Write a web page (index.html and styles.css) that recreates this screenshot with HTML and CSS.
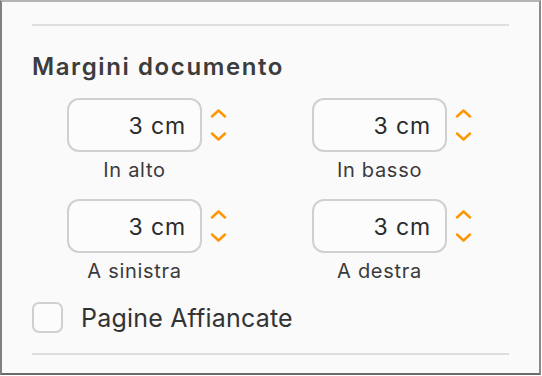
FILE: index.html
```html
<!DOCTYPE html>
<html lang="it">
<head>
  <meta charset="UTF-8">
  <meta name="viewport" content="width=device-width, initial-scale=1.0">
  <title>Margini documento</title>

  <link rel="stylesheet" href="styles.css">
</head>
<body>
<div class="panel">
  <hr class="divider">

  <h2 class="title">Margini documento</h2>

  <div class="margins">
    <div class="field">
      <div class="field-row">
        <div class="value">3 cm</div>
        <div class="stepper">
          <svg viewBox="0 0 17 9" width="17" height="9"><path d="M2 7.5 L8.5 1.5 L15 7.5"/></svg>
          <svg viewBox="0 0 17 9" width="17" height="9"><path d="M2 1.5 L8.5 7.5 L15 1.5"/></svg>
        </div>
      </div>
      <div class="label">In alto</div>
    </div>

    <div class="field">
      <div class="field-row">
        <div class="value">3 cm</div>
        <div class="stepper">
          <svg viewBox="0 0 17 9" width="17" height="9"><path d="M2 7.5 L8.5 1.5 L15 7.5"/></svg>
          <svg viewBox="0 0 17 9" width="17" height="9"><path d="M2 1.5 L8.5 7.5 L15 1.5"/></svg>
        </div>
      </div>
      <div class="label">In basso</div>
    </div>

    <div class="field">
      <div class="field-row">
        <div class="value">3 cm</div>
        <div class="stepper">
          <svg viewBox="0 0 17 9" width="17" height="9"><path d="M2 7.5 L8.5 1.5 L15 7.5"/></svg>
          <svg viewBox="0 0 17 9" width="17" height="9"><path d="M2 1.5 L8.5 7.5 L15 1.5"/></svg>
        </div>
      </div>
      <div class="label">A sinistra</div>
    </div>

    <div class="field">
      <div class="field-row">
        <div class="value">3 cm</div>
        <div class="stepper">
          <svg viewBox="0 0 17 9" width="17" height="9"><path d="M2 7.5 L8.5 1.5 L15 7.5"/></svg>
          <svg viewBox="0 0 17 9" width="17" height="9"><path d="M2 1.5 L8.5 7.5 L15 1.5"/></svg>
        </div>
      </div>
      <div class="label">A destra</div>
    </div>
  </div>

  <label class="check">
    <span class="check-box"></span>
    <span class="check-text">Pagine Affiancate</span>
  </label>

  <hr class="divider bottom">
</div>
</body>
</html>
```

FILE: styles.css
```css
body {
  margin: 0;
  font-family: Inter, "Noto Sans", sans-serif;
  color: #333;
}
.panel {
  box-sizing: border-box;
  width: 541px;
  height: 375px;
  padding: 22px 30px 0 30px;
  background: #fafafa;
  border-top: 2px solid #b4b4b4;
  border-left: 2px solid #808080;
  border-right: 2px solid #8a8a8a;
  border-bottom: 2px solid #6a6a6a;
}
.divider {
  margin: 0;
  border: none;
  height: 2px;
  background: #dedede;
}
.divider.bottom {
  margin-top: 20px;
}
.title {
  margin: 26px 0 0 0;
  font-size: 24px;
  line-height: 29px;
  font-weight: 600;
  letter-spacing: 1.6px;
  color: #3c3c3c;
}
.margins {
  display: grid;
  grid-template-columns: 245px 245px;
  row-gap: 17px;
  margin: 17px 0 0 35px;
}
.field-row {
  display: flex;
}
.value {
  box-sizing: border-box;
  width: 135px;
  height: 54px;
  padding: 3px 14px 0 0;
  border: 2px solid #d0d0d0;
  border-radius: 12px;
  background: #fcfcfc;
  font-size: 23px;
  line-height: 46px;
  letter-spacing: 0.9px;
  text-align: right;
  color: #2b2b2b;
}
.stepper {
  display: flex;
  flex-direction: column;
  justify-content: center;
  gap: 14px;
  margin-left: 8px;
}
.stepper svg {
  display: block;
  fill: none;
  stroke: #ff9500;
  stroke-width: 2.4;
  stroke-linecap: round;
  stroke-linejoin: round;
}
.label {
  width: 135px;
  margin-top: 6px;
  font-size: 20px;
  line-height: 24px;
  letter-spacing: 0.7px;
  text-align: center;
  color: #3a3a3a;
}
.check {
  display: flex;
  align-items: center;
  gap: 18px;
  margin-top: 19px;
}
.check-box {
  box-sizing: border-box;
  width: 31px;
  height: 31px;
  border: 2px solid #d0d0d0;
  border-radius: 7px;
  background: #fcfcfc;
}
.check-text {
  font-size: 25px;
  line-height: 30px;
  letter-spacing: 0.2px;
  color: #333;
}
```
